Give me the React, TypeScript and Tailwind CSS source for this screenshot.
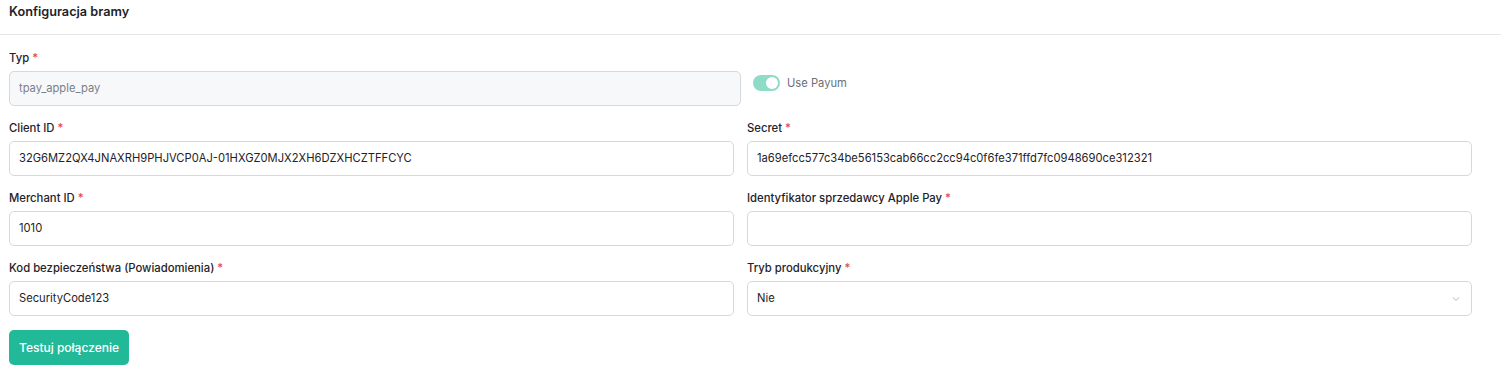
import React from "react";
import { ChevronDown } from "lucide-react";

const font = { fontFamily: "Inter, 'Noto Sans', sans-serif" };

function Label({ text }: { text: string }) {
  return (
    <div className="h-[16px] leading-[16px] text-[11.3px] font-medium text-[#1f2328] mb-[5px]">
      {text} <span className="text-[#e5484d]">*</span>
    </div>
  );
}

function Input({ value }: { value: string }) {
  return (
    <div className="h-[35px] border border-[#d5d8dc] rounded-[5px] bg-white flex items-center px-[9px] text-[11.2px] text-[#1f2328]">
      {value}
    </div>
  );
}

function Field({ label, value }: { label: string; value: string }) {
  return (
    <div>
      <Label text={label} />
      <Input value={value} />
    </div>
  );
}

export default function App() {
  return (
    <div className="w-[1501px] h-[371px] bg-white" style={font}>
      <div className="border-b border-[#e4e6e9] pl-[9px] pt-[3px] pb-[13px]">
        <div className="text-[12.7px] leading-[18px] font-semibold text-[#1f2328]">Konfiguracja bramy</div>
      </div>
      <div className="pl-[9px] pr-[29px] pt-[15px] flex flex-col gap-[14px]">
        <div className="flex items-start">
          <div className="w-[732px]">
            <Label text="Typ" />
            <div className="h-[35px] border border-[#d5d8dc] rounded-[5px] bg-[#f7f8fa] flex items-center px-[9px] text-[11.2px] text-[#7b8088]">
              tpay_apple_pay
            </div>
          </div>
          <div className="ml-[12px] mt-[25px] flex items-center gap-[7px]">
            <div className="w-[27px] h-[16px] rounded-full bg-[#8edcc7] flex items-center justify-end pr-[2px]">
              <div className="w-[12px] h-[12px] rounded-full bg-white" />
            </div>
            <span className="text-[11.2px] text-[#6b6f76]">Use Payum</span>
          </div>
        </div>
        <div className="grid grid-cols-2 gap-x-[13px] gap-y-[14px]">
          <Field label="Client ID" value="32G6MZ2QX4JNAXRH9PHJVCP0AJ-01HXGZ0MJX2XH6DZXHCZTFFCYC" />
          <Field label="Secret" value="1a69efcc577c34be56153cab66cc2cc94c0f6fe371ffd7fc0948690ce312321" />
          <Field label="Merchant ID" value="1010" />
          <Field label="Identyfikator sprzedawcy Apple Pay" value="" />
          <Field label="Kod bezpieczeństwa (Powiadomienia)" value="SecurityCode123" />
          <div>
            <Label text="Tryb produkcyjny" />
            <div className="h-[35px] border border-[#d5d8dc] rounded-[5px] bg-white flex items-center justify-between pl-[9px] pr-[9px] text-[11.2px] text-[#1f2328]">
              <span>Nie</span>
              <ChevronDown size={12} strokeWidth={1.5} className="text-[#9aa0a6]" />
            </div>
          </div>
        </div>
        <div>
          <button className="w-[120px] h-[35px] rounded-[5px] bg-[#22b998] text-white text-[12px] font-medium">
            Testuj połączenie
          </button>
        </div>
      </div>
    </div>
  );
}
